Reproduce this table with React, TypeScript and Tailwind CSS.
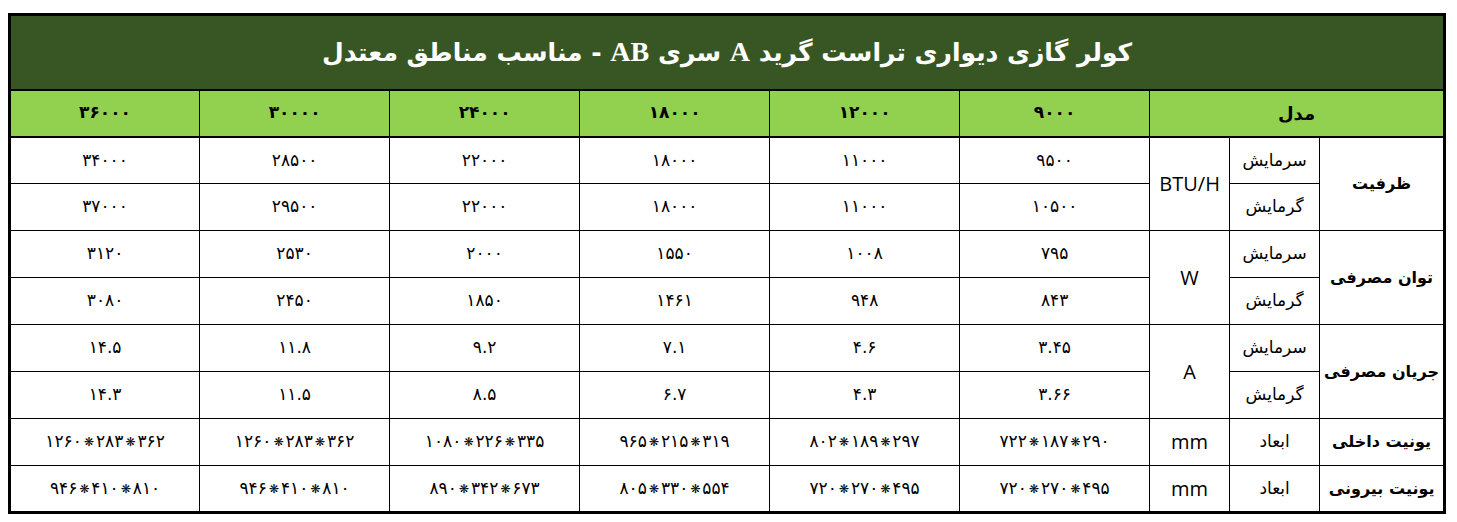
import React from "react";

const fa = { fontFamily: '"DejaVu Sans", "Noto Sans", sans-serif' };
const lat = { fontFamily: '"Open Sans", "Liberation Sans", sans-serif' };

const models = ["۹۰۰۰", "۱۲۰۰۰", "۱۸۰۰۰", "۲۴۰۰۰", "۳۰۰۰۰", "۳۶۰۰۰"];

type Group = {
  title: string;
  unit: string;
  rows: { label: string; values: (string | string[])[] }[];
};

const groups: Group[] = [
  {
    title: "ظرفیت",
    unit: "BTU/H",
    rows: [
      { label: "سرمایش", values: ["۹۵۰۰", "۱۱۰۰۰", "۱۸۰۰۰", "۲۲۰۰۰", "۲۸۵۰۰", "۳۴۰۰۰"] },
      { label: "گرمایش", values: ["۱۰۵۰۰", "۱۱۰۰۰", "۱۸۰۰۰", "۲۲۰۰۰", "۲۹۵۰۰", "۳۷۰۰۰"] },
    ],
  },
  {
    title: "توان مصرفی",
    unit: "W",
    rows: [
      { label: "سرمایش", values: ["۷۹۵", "۱۰۰۸", "۱۵۵۰", "۲۰۰۰", "۲۵۳۰", "۳۱۲۰"] },
      { label: "گرمایش", values: ["۸۴۳", "۹۴۸", "۱۴۶۱", "۱۸۵۰", "۲۴۵۰", "۳۰۸۰"] },
    ],
  },
  {
    title: "جریان مصرفی",
    unit: "A",
    rows: [
      { label: "سرمایش", values: ["۳.۴۵", "۴.۶", "۷.۱", "۹.۲", "۱۱.۸", "۱۴.۵"] },
      { label: "گرمایش", values: ["۳.۶۶", "۴.۳", "۶.۷", "۸.۵", "۱۱.۵", "۱۴.۳"] },
    ],
  },
  {
    title: "یونیت داخلی",
    unit: "mm",
    rows: [
      {
        label: "ابعاد",
        values: [
          ["۷۲۲", "۱۸۷", "۲۹۰"],
          ["۸۰۲", "۱۸۹", "۲۹۷"],
          ["۹۶۵", "۲۱۵", "۳۱۹"],
          ["۱۰۸۰", "۲۲۶", "۳۳۵"],
          ["۱۲۶۰", "۲۸۳", "۳۶۲"],
          ["۱۲۶۰", "۲۸۳", "۳۶۲"],
        ],
      },
    ],
  },
  {
    title: "یونیت بیرونی",
    unit: "mm",
    rows: [
      {
        label: "ابعاد",
        values: [
          ["۷۲۰", "۲۷۰", "۴۹۵"],
          ["۷۲۰", "۲۷۰", "۴۹۵"],
          ["۸۰۵", "۳۳۰", "۵۵۴"],
          ["۸۹۰", "۳۴۲", "۶۷۳"],
          ["۹۴۶", "۴۱۰", "۸۱۰"],
          ["۹۴۶", "۴۱۰", "۸۱۰"],
        ],
      },
    ],
  },
];

function Value({ v }: { v: string | string[] }) {
  if (typeof v === "string") return <>{v}</>;
  return (
    <>
      {v.map((p, i) => (
        <React.Fragment key={i}>
          {i > 0 && <span className="text-[12px] mx-[2px] align-[1px]">❋</span>}
          {p}
        </React.Fragment>
      ))}
    </>
  );
}

export default function App() {
  const serif = { fontFamily: '"Liberation Serif", serif' };
  return (
    <div className="bg-white w-[1457px] h-[522px] pt-[13px] pl-[8px]">
      <table
        dir="rtl"
        className="border-collapse border-[3px] border-black table-fixed w-[1436px]"
        style={fa}
      >
        <colgroup>
          <col className="w-[125px]" />
          <col className="w-[90px]" />
          <col className="w-[80px]" />
          <col className="w-[190px]" />
          <col className="w-[190px]" />
          <col className="w-[190px]" />
          <col className="w-[190px]" />
          <col className="w-[190px]" />
          <col className="w-[190px]" />
        </colgroup>
        <tbody>
          <tr className="h-[75px] bg-[#375623]">
            <td
              colSpan={9}
              className="border-b-2 border-black text-center text-white font-bold text-[25px]"
            >
              کولر گازی دیواری تراست گرید{" "}
              <span className="text-[28px]" style={serif}>A</span> سری{" "}
              <span className="text-[28px]" style={serif}>AB</span> - مناسب مناطق معتدل
            </td>
          </tr>
          <tr className="h-[47px] bg-[#92d050]">
            <td colSpan={3} className="border border-black border-b-2 text-center font-bold text-[18px]">
              مدل
            </td>
            {models.map((m, i) => (
              <td key={i} className="border border-black border-b-2 text-center font-bold text-[17px]">
                {m}
              </td>
            ))}
          </tr>
          {groups.map((g, gi) =>
            g.rows.map((r, ri) => (
              <tr key={`${gi}-${ri}`} className="h-[47px]">
                {ri === 0 && (
                  <td
                    rowSpan={g.rows.length}
                    className="border border-black text-center font-bold text-[16px] whitespace-nowrap"
                  >
                    {g.title}
                  </td>
                )}
                <td className="border border-black text-center text-[17px]">{r.label}</td>
                {ri === 0 && (
                  <td
                    rowSpan={g.rows.length}
                    dir="ltr"
                    className="border border-black text-center text-[20px]"
                    style={lat}
                  >
                    {g.unit}
                  </td>
                )}
                {r.values.map((v, vi) => (
                  <td key={vi} dir="ltr" className="border border-black text-center text-[17px]">
                    <Value v={v} />
                  </td>
                ))}
              </tr>
            ))
          )}
        </tbody>
      </table>
    </div>
  );
}
